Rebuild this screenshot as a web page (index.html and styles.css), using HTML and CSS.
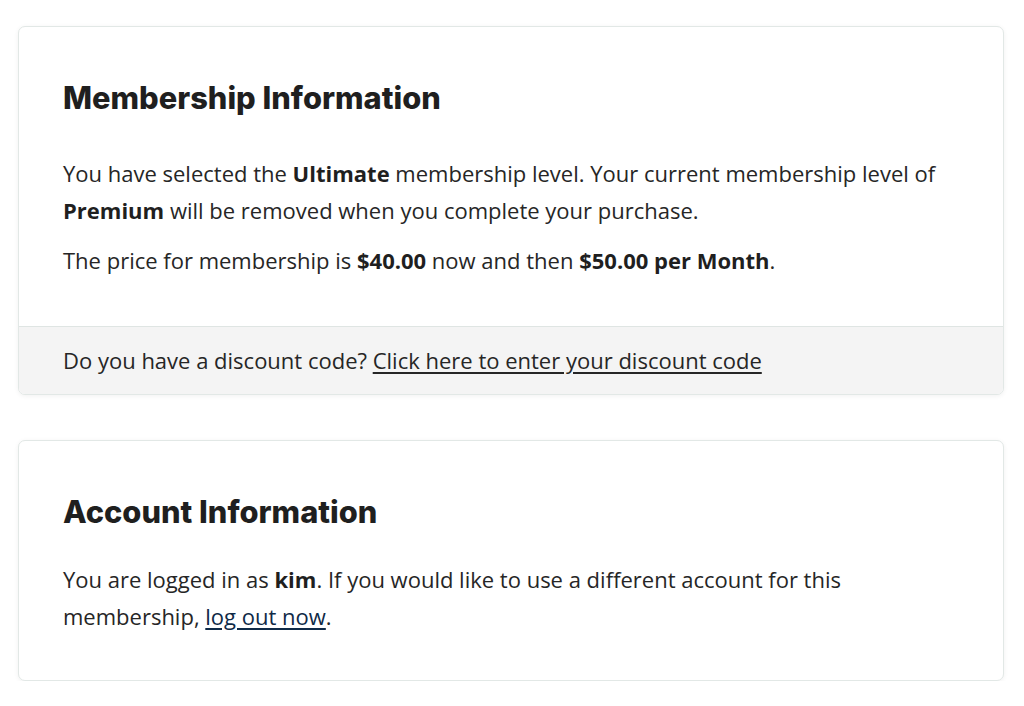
FILE: index.html
```html
<!DOCTYPE html>
<html lang="en">
<head>
<meta charset="utf-8">
<title>Checkout</title>
<link rel="stylesheet" href="styles.css">
</head>
<body>
<main class="page">
  <section class="card">
    <div class="card-body">
      <h2 class="card-title">Membership Information</h2>
      <p>You have selected the <strong>Ultimate</strong> membership level. Your current membership level of <strong>Premium</strong> will be removed when you complete your purchase.</p>
      <p>The price for membership is <strong>$40.00</strong> now and then <strong>$50.00 per Month</strong>.</p>
    </div>
    <div class="card-footer">
      <p>Do you have a discount code? <a href="#" class="plain-link">Click here to enter your discount code</a></p>
    </div>
  </section>
  <section class="card">
    <div class="card-body card-body--account">
      <h2 class="card-title card-title--tight">Account Information</h2>
      <p>You are logged in as <strong>kim</strong>. If you would like to use a different account for this membership, <a href="#" class="navy-link">log out now</a>.</p>
    </div>
  </section>
</main>
</body>
</html>
```
FILE: styles.css
```css
html, body {
  margin: 0;
  padding: 0;
  background: #ffffff;
}
body {
  font-family: "Open Sans", "Noto Sans", sans-serif;
  font-size: 22px;
  line-height: 37px;
  color: #262626;
}
.page {
  padding: 26px 20px 0 18px;
  display: flex;
  flex-direction: column;
  gap: 45px;
}
.card {
  border: 1px solid #e2e8e6;
  border-radius: 7px;
  background: #fff;
  box-shadow: 0 1px 5px rgba(0, 0, 0, 0.06);
  overflow: hidden;
}
.card-body {
  padding: 54px 44px 34px 44px;
}
.card-body--account {
  padding-bottom: 32px;
}
.card-title {
  font-family: "Inter", "Noto Sans", sans-serif;
  font-weight: 800;
  font-size: 30.8px;
  line-height: 34px;
  color: #1f1f1f;
  margin: 0 0 40px 0;
}
.card-title--tight {
  margin-bottom: 32px;
}
.card-body p {
  margin: 0 0 13px 0;
}
strong {
  font-weight: 700;
  color: #1f1f1f;
}
.card-footer {
  background: #f4f4f4;
  border-top: 1px solid #dfe5e3;
  padding: 15px 44px 15px 44px;
}
.card-footer p {
  margin: 0;
}
.plain-link {
  color: #262626;
  text-decoration: underline;
  text-underline-offset: 3px;
}
.navy-link {
  color: #0f2a47;
  text-decoration: underline;
  text-underline-offset: 3px;
}
```
